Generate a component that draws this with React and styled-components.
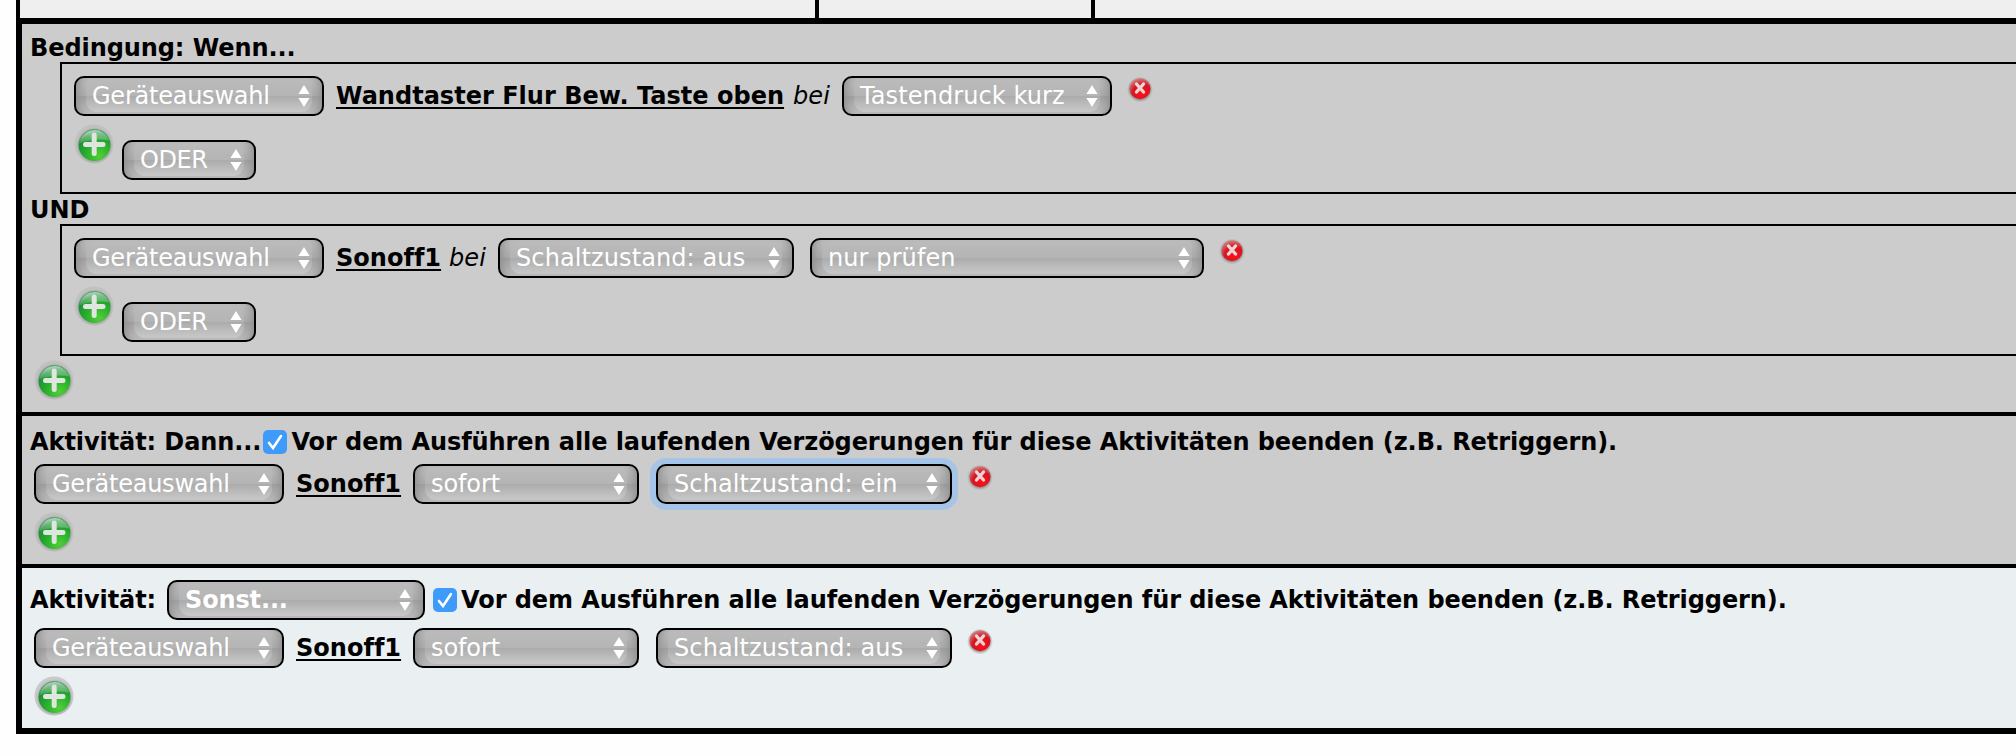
import React from "react";
import styled, { createGlobalStyle, css } from "styled-components";

const Global = createGlobalStyle`
  body { margin: 0; background: #fefefe; overflow: hidden; }
  * { box-sizing: border-box; }
`;

const Page = styled.div`
  width: 100%;
  height: 756px;
  padding-left: 16px;
  overflow: hidden;
  font: 24px/30px "DejaVu Sans", Verdana, sans-serif;
  letter-spacing: 0.1px;
  color: #000;
  white-space: nowrap;
`;

const HeaderRow = styled.div`
  display: flex;
  height: 18px;
  background: #efefef;
`;

const HeaderCell = styled.div`
  width: ${(p) => p.$width};
  border-left: 4px solid #000;
`;

const Rule = styled.div`
  border: solid #000;
  border-width: 6px 0 6px 6px;
`;

const Section = styled.section`
  height: ${(p) => p.$height}px;
  padding: ${(p) => p.$top}px 0 0 8px;
  background: ${(p) => p.$tone};
  & + & { border-top: 4px solid #000; }
`;

const Title = styled.div`
  display: flex;
  align-items: center;
  height: ${(p) => p.$height || 30}px;
  padding-top: ${(p) => (p.$height ? 0 : 2)}px;
  margin-bottom: ${(p) => p.$gap || 0}px;
  font-weight: bold;
  line-height: 30px;
  letter-spacing: -0.08px;
`;

const Group = styled.div`
  height: 132px;
  margin-left: 30px;
  padding: 12px 0 0 12px;
  border: 2px solid #000;
  border-right: 0;
`;

const Row = styled.div`
  display: flex;
  align-items: ${(p) => p.$align || "center"};
  height: ${(p) => p.$height || 40}px;
  margin-left: ${(p) => p.$indent || 0}px;
`;

const Select = styled.button`
  position: relative;
  z-index: 0;
  display: flex;
  flex: none;
  align-items: center;
  justify-content: space-between;
  width: ${(p) => p.$width}px;
  height: 40px;
  margin: ${(p) => p.$drop || 0}px 0 0 ${(p) => p.$left || 0}px;
  padding: 0 12px 0 16px;
  border: 2px solid #000;
  border-radius: 10px;
  background: linear-gradient(#bcbcbc, #ababab 50%, #a0a0a0 50%, #bcbcbc);
  box-shadow: inset 10px 0 8px -8px #8c8c8c, inset -10px 0 8px -8px #8c8c8c
    ${(p) => p.$focused && css`, 0 0 0 6px #a5c5e8`};
  color: #fff;
  font: inherit;
  font-weight: ${(p) => (p.$bold ? "bold" : "normal")};
  letter-spacing: ${(p) => p.$tracking ?? 0.1}px;

  &::before {
    content: "";
    position: absolute;
    z-index: -1;
    inset: 0 10px 2px;
    border-radius: 4px 4px 11px 11px;
    background: linear-gradient(#fff0, #ffffff38);
  }
`;

const Device = styled.a`
  width: ${(p) => p.$width}px;
  margin-left: 12px;
  font-weight: bold;
  letter-spacing: 0.02px;
  text-decoration: underline;
  text-decoration-thickness: 2px;
  text-underline-offset: 3px;
`;

const At = styled.i`
  width: 36px;
  margin-left: 8px;
`;

const Tick = styled.span`
  display: flex;
  width: 24px;
  height: 24px;
  margin: 0 4px 0 ${(p) => p.$left}px;
  border-radius: 5px;
  background: #3f9bfa;
`;

const Icon = styled.svg`
  display: block;
  flex: none;
  align-self: flex-start;
  margin: ${(p) => p.$margin || 0};
`;

function Dropdown({ children, ...props }) {
  return (
    <Select {...props}>
      <span>{children}</span>
      <svg width="12" height="22" viewBox="0 0 12 22" fill="#fff">
        <path d="M6 0 11.6 9H.4ZM.4 13h11.2L6 22Z" />
      </svg>
    </Select>
  );
}

function DevicePicker() {
  return <Dropdown $width={250} $tracking={-0.24}>Geräteauswahl</Dropdown>;
}

function Add({ margin }) {
  return (
    <Icon $margin={margin} width="40" height="40" viewBox="0 0 40 40">
      <circle cx="20" cy="20" r="19.500" fill="#bdbdbd" opacity=".75" />
      <circle cx="20.500" cy="21.500" r="18.500" fill="url(#halo)" />
      <circle cx="20.500" cy="21" r="16" fill="url(#green)" />
      <path d="M5.500 19.500a15.500 15.500 0 0 1 30-3Q20 13.500 5.500 19.500Z" fill="url(#gloss)" />
      <path d="M20.200 11v18.500M11.500 20.500h17.500" stroke="#dfe6df" strokeWidth="5" strokeLinecap="round" />
    </Icon>
  );
}

function Remove() {
  return (
    <Icon $margin="0 0 0 15px" width="26" height="28" viewBox="0 0 26 28">
      <circle cx="13" cy="13.500" r="13" fill="url(#halo)" />
      <circle cx="13" cy="12.700" r="10.500" fill="url(#red)" />
      <path d="m9.500 8 7 8m0-8-7 8" stroke="#ecd4d4" strokeWidth="3.400" strokeLinecap="round" />
    </Icon>
  );
}

function Check({ left }) {
  return (
    <Tick $left={left}>
      <svg width="24" height="24" fill="none" stroke="#fff" strokeWidth="2.600" strokeLinecap="round">
        <path d="m6 13 4 5 8-12" />
      </svg>
    </Tick>
  );
}

function Condition({ device, width, children }) {
  return (
    <Group>
      <Row>
        <DevicePicker />
        <Device $width={width}>{device}</Device>
        <At>bei</At>
        {children}
        <Remove />
      </Row>
      <Row $height={64} $align="flex-start">
        <Add margin="8px 8px 0 0" />
        <Dropdown $width={134} $drop={24} $tracking={-0.4}>ODER</Dropdown>
      </Row>
    </Group>
  );
}

function Action({ state, focused }) {
  return (
    <>
      <Row $indent={4}>
        <DevicePicker />
        <Device $width={105}>Sonoff1</Device>
        <Dropdown $width={226} $left={12} $tracking={-0.1}>sofort</Dropdown>
        <Dropdown $width={296} $left={17} $focused={focused}>{state}</Dropdown>
        <Remove />
      </Row>
      <Add margin="8px 0 0 4px" />
    </>
  );
}

const NOTE = "Vor dem Ausführen alle laufenden Verzögerungen für diese Aktivitäten beenden (z.B. Retriggern).";

export default function App() {
  return (
    <Page>
      <Global />
      <svg width="0" height="0" style={{ position: "absolute" }}>
        <defs>
          <radialGradient id="green" cx=".65" cy=".85" r=".85">
            <stop offset="0" stopColor="#52cf38" />
            <stop offset=".5" stopColor="#27ae2c" />
            <stop offset=".85" stopColor="#1f8f38" />
            <stop offset="1" stopColor="#5fa575" />
          </radialGradient>
          <linearGradient id="gloss" x2="0" y2="1">
            <stop offset="0" stopColor="#fff" stopOpacity=".55" />
            <stop offset="1" stopColor="#fff" stopOpacity=".1" />
          </linearGradient>
          <radialGradient id="halo">
            <stop offset=".75" stopColor="#777" stopOpacity=".7" />
            <stop offset="1" stopColor="#999" stopOpacity="0" />
          </radialGradient>
          <radialGradient id="red" cx=".6" cy=".75" r=".75">
            <stop offset="0" stopColor="#ff1018" />
            <stop offset=".6" stopColor="#d51522" />
            <stop offset="1" stopColor="#cf7f80" />
          </radialGradient>
        </defs>
      </svg>
      <HeaderRow>
        <HeaderCell $width="799px" />
        <HeaderCell $width="276px" />
        <HeaderCell $width="925px" />
      </HeaderRow>
      <Rule>
        <Section $height={388} $top={8} $tone="#ccc">
          <Title>Bedingung: Wenn...</Title>
          <Condition device="Wandtaster Flur Bew. Taste oben" width={449}>
            <Dropdown $width={270} $left={13}>Tastendruck kurz</Dropdown>
          </Condition>
          <Title>UND</Title>
          <Condition device="Sonoff1" width={105}>
            <Dropdown $width={296} $left={13}>Schaltzustand: aus</Dropdown>
            <Dropdown $width={394} $left={16}>nur prüfen</Dropdown>
          </Condition>
          <Add margin="4px 0 0 4px" />
        </Section>
        <Section $height={152} $top={10} $tone="#ccc">
          <Title $gap={8}>
            Aktivität: Dann...
            <Check left={2} />
            {NOTE}
          </Title>
          <Action state="Schaltzustand: ein" focused />
        </Section>
        <Section $height={164} $top={12} $tone="#eaeff2">
          <Title $height={40} $gap={8}>
            Aktivität:
            <Dropdown $width={258} $left={11} $bold $tracking={-0.15}>Sonst...</Dropdown>
            <Check left={8} />
            {NOTE}
          </Title>
          <Action state="Schaltzustand: aus" />
        </Section>
      </Rule>
    </Page>
  );
}
